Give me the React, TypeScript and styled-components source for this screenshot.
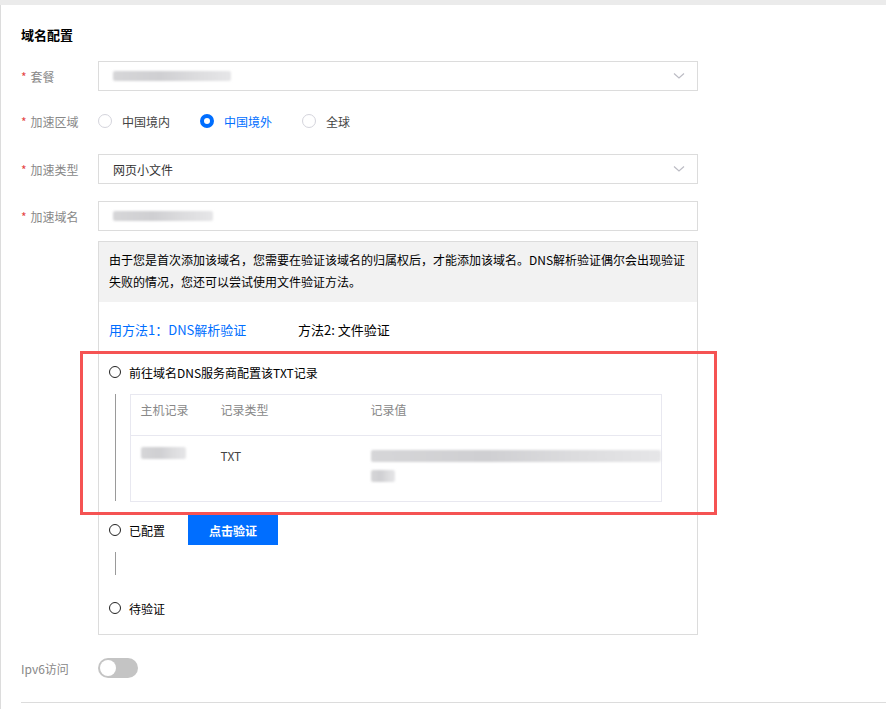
import React from "react";
import styled, { createGlobalStyle } from "styled-components";

const GlobalStyle = createGlobalStyle`
  html, body {
    margin: 0;
    padding: 0;
    background: #ebebeb;
    font-family: "Noto Sans CJK SC", "Liberation Sans", sans-serif;
    font-size: 12px;
    color: #000;
  }
`;

const Panel = styled.section`
  margin-top: 5px;
  min-height: 704px;
  background: #fff;
  border-left: 1px solid #dcdcdc;
  padding: 21px 0 0 20px;
  box-sizing: border-box;
`;

const Title = styled.h2`
  margin: 0 0 17px;
  font-size: 13px;
  font-weight: 700;
  line-height: 18px;
  color: #000;
`;

const Form = styled.div`
  display: flex;
  flex-direction: column;
`;

const Row = styled.div<{ $mb?: number }>`
  display: flex;
  align-items: flex-start;
  margin-bottom: ${(p) => p.$mb ?? 0}px;
`;

const Label = styled.div<{ $h?: number }>`
  width: 77px;
  flex: none;
  height: ${(p) => p.$h ?? 30}px;
  display: flex;
  align-items: center;
  color: #888;
  font-size: 12px;
`;

const Star = styled.span`
  color: #e54545;
  margin-right: 4px;
`;

const Field = styled.div`
  width: 600px;
  display: flex;
  flex-direction: column;
`;

const Input = styled.div`
  height: 30px;
  box-sizing: border-box;
  border: 1px solid #dcdcdc;
  display: flex;
  align-items: center;
  justify-content: space-between;
  padding: 0 12px 0 14px;
  color: #333;
`;

const Blur = styled.span<{ $w: number; $h?: number }>`
  display: inline-block;
  width: ${(p) => p.$w}px;
  height: ${(p) => p.$h ?? 10}px;
  background: linear-gradient(90deg, #d6d6d8, #cfcfd2 40%, #dcdcde 70%, #e6e6e8);
  filter: blur(1.2px);
  border-radius: 2px;
`;

const Chevron = () => (
  <svg width="12" height="8" viewBox="0 0 12 8">
    <path d="M1 1.5 L6 6 L11 1.5" fill="none" stroke="#bcbcc4" strokeWidth="1.2" />
  </svg>
);

const Radios = styled.div`
  height: 30px;
  display: flex;
  align-items: center;
`;

const RadioItem = styled.label<{ $on?: boolean }>`
  display: flex;
  align-items: center;
  width: 102px;
  color: ${(p) => (p.$on ? "#006eff" : "#444")};
`;

const RadioDot = styled.span<{ $on?: boolean }>`
  width: 14px;
  height: 14px;
  box-sizing: border-box;
  border-radius: 50%;
  margin-right: 10px;
  border: ${(p) => (p.$on ? "4.5px solid #006eff" : "1px solid #d4d4dc")};
  background: #fff;
`;

const Notice = styled.div`
  margin-top: 10px;
  border: 1px solid #dcdcdc;
  position: relative;
  padding-bottom: 11px;
`;

const NoticeText = styled.p`
  margin: 0;
  background: #f2f2f2;
  padding: 7px 10px 9px;
  line-height: 22px;
  font-size: 12px;
  color: #000;
`;

const Tabs = styled.div`
  display: flex;
  height: 22px;
  align-items: center;
  margin: 16px 0 0 10px;
  font-size: 13px;
`;

const Tab = styled.span<{ $on?: boolean }>`
  width: 189px;
  color: ${(p) => (p.$on ? "#006eff" : "#000")};
`;

const Steps = styled.div`
  margin: 17px 0 0 10px;
  display: flex;
  flex-direction: column;
`;

const StepHead = styled.div`
  display: flex;
  align-items: center;
  height: 30px;
`;

const Circle = styled.span`
  width: 12px;
  height: 12px;
  box-sizing: border-box;
  border: 1.5px solid #222;
  border-radius: 50%;
  margin-right: 8px;
  flex: none;
`;

const StepText = styled.span`
  color: #000;
  width: 59px;
`;

const StepBody = styled.div<{ $h?: number }>`
  display: flex;
  gap: 14px;
  padding-left: 5.5px;
  min-height: ${(p) => p.$h ?? 0}px;
  margin: 7px 0 13px;
`;

const Line = styled.div<{ $h: number }>`
  width: 1px;
  height: ${(p) => p.$h}px;
  background: #9a9a9a;
  flex: none;
`;

const Table = styled.div`
  width: 532px;
  border: 1px solid #e8e8f0;
  box-sizing: border-box;
`;

const TRow = styled.div<{ $head?: boolean }>`
  display: grid;
  grid-template-columns: 80px 150px 1fr;
  align-items: start;
  padding: ${(p) => (p.$head ? "6px 10px 0" : "11px 10px 0")};
  height: ${(p) => (p.$head ? 41 : 65)}px;
  line-height: 18px;
  box-sizing: border-box;
  border-bottom: ${(p) => (p.$head ? "1px solid #e8e8f0" : "none")};
  color: ${(p) => (p.$head ? "#888" : "#444")};
`;

const ValueCell = styled.div`
  display: flex;
  flex-direction: column;
  gap: 8px;
  padding-top: 3px;
`;

const Button = styled.button`
  width: 90px;
  height: 30px;
  border: none;
  background: #006eff;
  color: #fff;
  font-family: inherit;
  font-size: 12px;
  font-weight: 700;
  cursor: pointer;
`;

const Highlight = styled.div`
  position: absolute;
  left: -19px;
  top: 109px;
  width: 637px;
  height: 164px;
  box-sizing: border-box;
  border: 3px solid #f55353;
  pointer-events: none;
`;

const Toggle = styled.span`
  width: 40px;
  height: 20px;
  border-radius: 10px;
  background: #c4c4c4;
  position: relative;
  display: inline-block;
  &::after {
    content: "";
    position: absolute;
    left: 2px;
    top: 2px;
    width: 16px;
    height: 16px;
    border-radius: 50%;
    background: #fff;
  }
`;

const Divider = styled.hr`
  margin: 24px 0 0;
  border: none;
  border-top: 1px solid #dcdcdc;
`;

export default function App() {
  return (
    <>
      <GlobalStyle />
      <Panel>
        <Title>域名配置</Title>
        <Form>
          <Row $mb={15}>
            <Label><Star>*</Star>套餐</Label>
            <Field>
              <Input>
                <Blur $w={118} />
                <Chevron />
              </Input>
            </Field>
          </Row>
          <Row $mb={18}>
            <Label><Star>*</Star>加速区域</Label>
            <Radios>
              <RadioItem><RadioDot />中国境内</RadioItem>
              <RadioItem $on><RadioDot $on />中国境外</RadioItem>
              <RadioItem><RadioDot />全球</RadioItem>
            </Radios>
          </Row>
          <Row $mb={17}>
            <Label><Star>*</Star>加速类型</Label>
            <Field>
              <Input>
                <span>网页小文件</span>
                <Chevron />
              </Input>
            </Field>
          </Row>
          <Row $mb={23}>
            <Label><Star>*</Star>加速域名</Label>
            <Field>
              <Input>
                <Blur $w={100} />
              </Input>
              <Notice>
                <NoticeText>
                  由于您是首次添加该域名，您需要在验证该域名的归属权后，才能添加该域名。DNS解析验证偶尔会出现验证失败的情况，您还可以尝试使用文件验证方法。
                </NoticeText>
                <Tabs>
                  <Tab $on>用方法1：DNS解析验证</Tab>
                  <Tab>方法2: 文件验证</Tab>
                </Tabs>
                <Steps>
                  <StepHead>
                    <Circle />
                    <span>前往域名DNS服务商配置该TXT记录</span>
                  </StepHead>
                  <StepBody>
                    <Line $h={107} />
                    <Table>
                      <TRow $head>
                        <span>主机记录</span>
                        <span>记录类型</span>
                        <span>记录值</span>
                      </TRow>
                      <TRow>
                        <Blur $w={45} $h={12} />
                        <span>TXT</span>
                        <ValueCell>
                          <Blur $w={290} $h={12} />
                          <Blur $w={24} $h={12} />
                        </ValueCell>
                      </TRow>
                    </Table>
                  </StepBody>
                  <StepHead>
                    <Circle />
                    <StepText>已配置</StepText>
                    <Button>点击验证</Button>
                  </StepHead>
                  <StepBody $h={28}>
                    <Line $h={23} />
                  </StepBody>
                  <StepHead>
                    <Circle />
                    <StepText>待验证</StepText>
                  </StepHead>
                </Steps>
                <Highlight />
              </Notice>
            </Field>
          </Row>
          <Row>
            <Label $h={20}>Ipv6访问</Label>
            <Toggle />
          </Row>
        </Form>
        <Divider />
      </Panel>
    </>
  );
}
